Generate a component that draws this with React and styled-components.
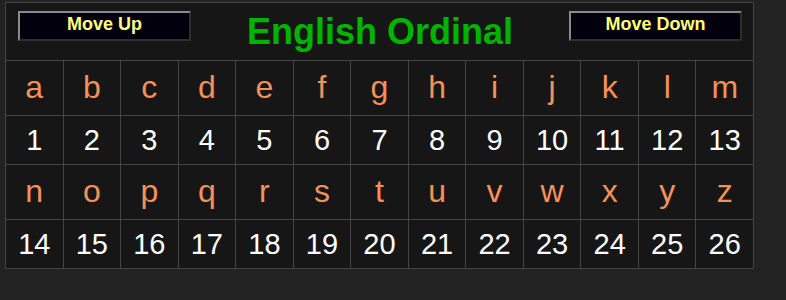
import React from "react";
import styled, { createGlobalStyle } from "styled-components";

const GlobalStyle = createGlobalStyle`
  html, body {
    margin: 0;
    padding: 0;
    background: #222222;
  }
  body {
    font-family: "Liberation Sans", Arial, sans-serif;
  }
`;

const Page = styled.div`
  padding: 2px 0 0 5px;
`;

const Panel = styled.div`
  width: 747px;
  border: 1px solid #444444;
  background: #161616;
`;

const Header = styled.div`
  height: 57px;
  box-sizing: border-box;
  display: flex;
  align-items: flex-start;
  justify-content: space-between;
  padding: 8px 11px 0 12px;
`;

const NavButton = styled.button`
  width: 173px;
  height: 30px;
  box-sizing: border-box;
  margin: 0;
  padding: 0 0 4px;
  border-style: solid;
  border-width: 2px;
  border-color: #8a8a8a #2e2e2e #2e2e2e #8a8a8a;
  background: #02000c;
  color: #ffff80;
  font-family: "Liberation Sans", Arial, sans-serif;
  font-weight: bold;
  font-size: 18px;
  line-height: 1;
  cursor: pointer;
`;

const Title = styled.h1`
  margin: 0;
  color: #00b300;
  font-size: 36px;
  font-weight: bold;
  line-height: 1.15;
`;

const Grid = styled.div`
  display: grid;
  grid-template-columns: repeat(13, 1fr);
  gap: 1px;
  background: #444444;
  border-top: 1px solid #444444;
`;

const Cell = styled.div`
  height: ${(p) => (p.$letter ? 54 : 48)}px;
  display: flex;
  align-items: center;
  justify-content: center;
  background: #161616;
  color: ${(p) => (p.$letter ? "#f4915a" : "#ffffff")};
  font-size: ${(p) => (p.$letter ? 32 : 29)}px;
  line-height: 1;
  padding-bottom: ${(p) => (p.$letter ? 2 : 0)}px;
  box-sizing: border-box;
`;

const letters = "abcdefghijklmnopqrstuvwxyz".split("");
const halves = [letters.slice(0, 13), letters.slice(13)];

export default function App() {
  return (
    <>
      <GlobalStyle />
      <Page>
        <Panel>
          <Header>
            <NavButton>Move Up</NavButton>
            <Title>English Ordinal</Title>
            <NavButton>Move Down</NavButton>
          </Header>
          <Grid>
            {halves.map((half, h) => (
              <React.Fragment key={h}>
                {half.map((ch) => (
                  <Cell $letter key={ch}>
                    {ch}
                  </Cell>
                ))}
                {half.map((ch, i) => (
                  <Cell key={ch + "n"}>{h * 13 + i + 1}</Cell>
                ))}
              </React.Fragment>
            ))}
          </Grid>
        </Panel>
      </Page>
    </>
  );
}
